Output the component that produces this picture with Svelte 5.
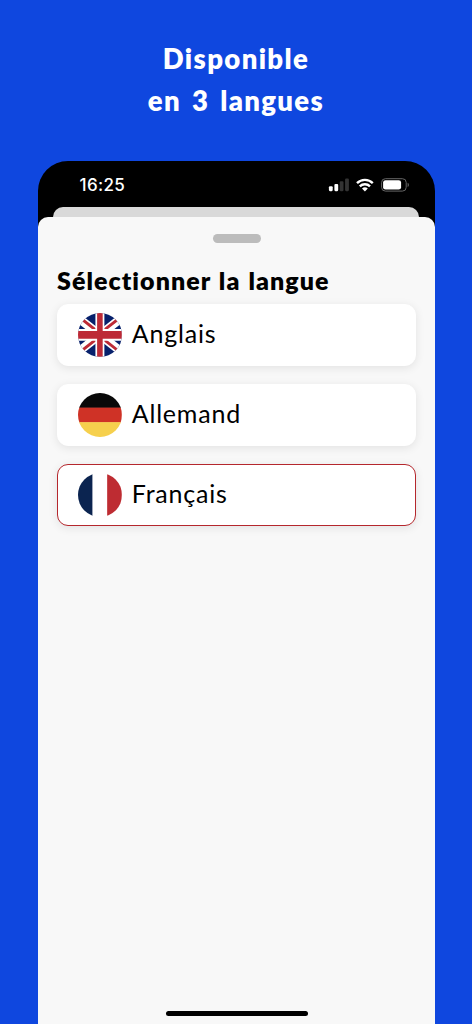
<script>
    let time = "16:25"
    let selected = "fr"

    const languages = [
        { code: "en", name: "Anglais" },
        { code: "de", name: "Allemand" },
        { code: "fr", name: "Français" }
    ]

    function select(code) {
        selected = code
    }
</script>

<main>
    <h1>Disponible<br>en 3 langues</h1>

    <div class="phone">
        <div class="status">
            <span class="time">{time}</span>
            <svg class="icons" width="82" height="16" viewBox="0 0 82 16">
                <!-- signal -->
                <rect x="0.9" y="9.2" width="3.8" height="5" rx="1.1" fill="#fff" />
                <rect x="6.4" y="7" width="3.8" height="7.2" rx="1.1" fill="#fff" />
                <rect x="11.7" y="4.3" width="3.8" height="9.9" rx="1.1" fill="#333" />
                <rect x="17.1" y="1.6" width="3.8" height="12.6" rx="1.1" fill="#333" />
                <!-- wifi -->
                <g fill="none" stroke="#fff" stroke-width="2.4">
                    <path d="M29 6.1a11.3 11.3 0 0 1 15.8 0" />
                    <path d="M31.8 9.4a7.3 7.3 0 0 1 10.2 0" />
                </g>
                <path d="M34 11.5a4.3 4.3 0 0 1 5.8 0l-2.9 2.9z" fill="#fff" />
                <!-- battery -->
                <rect x="53.6" y="1.7" width="24.6" height="12.4" rx="3.8" fill="none" stroke="#666" />
                <rect x="55.1" y="3.2" width="18" height="9.4" rx="2.4" fill="#fff" />
                <path d="M79.6 5.8v4.3c1.7-.7 1.7-3.6 0-4.3z" fill="#666" />
            </svg>
        </div>
        <div class="behind"></div>

        <div class="sheet">
            <div class="handle"></div>
            <h2>Sélectionner la langue</h2>
            {#each languages as language}
                <button class:active={selected === language.code} on:click={() => select(language.code)}>
                    <svg class="flag" viewBox="0 0 44 44">
                        {#if language.code === "en"}
                            <rect width="44" height="44" fill="#07206b" />
                            <path d="M-6 0L50 44M50 0L-6 44" stroke="#fff" stroke-width="8.6" />
                            <path d="M-6-1.5L22 20.5M50-1.5L22 20.5M22 23.5L-6 45.5M22 23.5L50 45.5" stroke="#bd2a36" stroke-width="2.9" />
                            <path d="M22 0v44" stroke="#fff" stroke-width="9" />
                            <path d="M0 22h44" stroke="#fff" stroke-width="12" />
                            <path d="M22 0v44" stroke="#bd2a36" stroke-width="5.6" />
                            <path d="M0 22h44" stroke="#bd2a36" stroke-width="7.6" />
                        {:else if language.code === "de"}
                            <rect width="44" height="15" fill="#090909" />
                            <rect y="14.7" width="44" height="15" fill="#cf3226" />
                            <rect y="29.3" width="44" height="15" fill="#f6d04d" />
                        {:else}
                            <rect width="14.7" height="44" fill="#0b2450" />
                            <rect x="14.7" width="14.6" height="44" fill="#fff" />
                            <rect x="29.3" width="14.7" height="44" fill="#be2c32" />
                        {/if}
                    </svg>
                    <span class="name">{language.name}</span>
                </button>
            {/each}
            <div class="home"></div>
        </div>
    </div>
</main>

<style>
    :global(body) {
        background: #0f47df;
    }
    main {
        height: 1024px;
        display: flex;
        flex-direction: column;
        overflow: hidden;
        background: #0f47df;
        font-family: Lato, sans-serif;
    }
    h1 {
        height: 122.5px;
        margin: 0;
        padding-top: 38px;
        color: #fff;
        font-size: 27.5px;
        font-weight: 800;
        line-height: 42px;
        letter-spacing: 1.35px;
        word-spacing: 3.2px;
        text-align: center;
    }
    .phone {
        flex: 1;
        display: flex;
        flex-direction: column;
        margin: 0 37.4px 0 37.6px;
        background: #000;
        border-radius: 30px 30px 0 0;
        overflow: hidden;
    }
    .status {
        height: 46.5px;
        display: flex;
        justify-content: space-between;
        padding: 0 24.4px 0 42px;
    }
    .time {
        padding-top: 14px;
        color: #fff;
        font-family: Inter, sans-serif;
        font-size: 17px;
        font-weight: 500;
        line-height: 21px;
        letter-spacing: 0.3px;
    }
    .icons {
        margin-top: 16.5px;
    }
    .behind {
        height: 10px;
        margin: 0 15.5px;
        background: #d9d9d9;
        border-radius: 10px 10px 0 0;
    }
    .sheet {
        flex: 1;
        display: flex;
        flex-direction: column;
        padding: 17.3px 18.6px 8px 19.4px;
        background: #f8f8f8;
        border-radius: 10px 10px 0 0;
    }
    .handle {
        width: 48px;
        height: 8.6px;
        align-self: center;
        border-radius: 5px;
        background: #bcbcbc;
    }
    h2 {
        margin: 22px 0 9px;
        color: #000;
        font-size: 25px;
        font-weight: 800;
        line-height: 30px;
        letter-spacing: 1.05px;
        word-spacing: 1.2px;
        white-space: nowrap;
    }
    button {
        height: 62.5px;
        display: flex;
        align-items: center;
        margin: 0 0 17.5px;
        padding: 0 20px;
        border: 1px solid #fff;
        border-radius: 11px;
        background: #fff;
        box-shadow: 0 2px 10px rgba(0, 0, 0, 0.09);
        color: #000;
        font-family: Lato, sans-serif;
        font-size: 25px;
        letter-spacing: 0.8px;
    }
    button.active {
        border-color: #b5272d;
    }
    .flag {
        width: 43.8px;
        height: 43.8px;
        margin-right: 10px;
        border-radius: 50%;
    }
    .name {
        padding-bottom: 4px;
    }
    .home {
        width: 142px;
        height: 5px;
        margin-top: auto;
        align-self: center;
        border-radius: 3px;
        background: #000;
    }
</style>
